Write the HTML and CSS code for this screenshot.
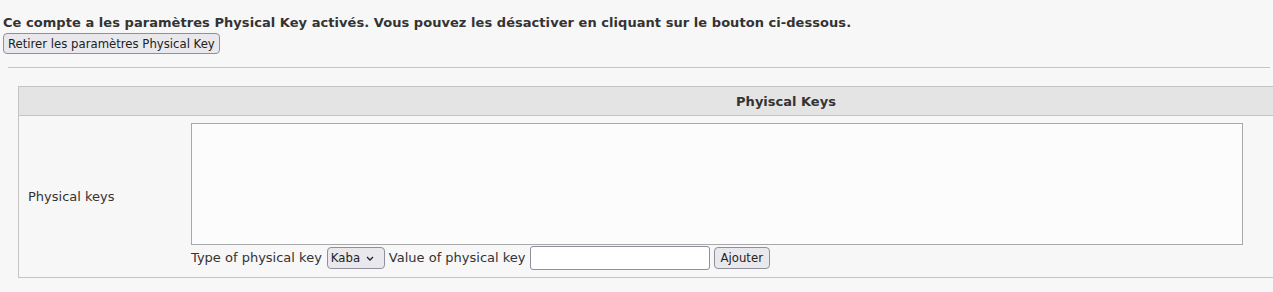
FILE: index.html
```html
<!DOCTYPE html>
<html lang="fr">
<head>
    <meta charset="UTF-8">
    <meta name="viewport" content="width=device-width, initial-scale=1.0">
    <title>Physical Key</title>
    <link rel="stylesheet" href="styles.css">
</head>
<body>
    <div class="page">
        <p class="notice">Ce compte a les paramètres Physical Key activés. Vous pouvez les désactiver en cliquant sur le bouton ci-dessous.</p>
        <button class="btn">Retirer les paramètres Physical Key</button>
        <hr class="sep">
        <table class="keys-table">
            <tr>
                <th colspan="2">Phyiscal Keys</th>
            </tr>
            <tr>
                <td class="label-cell">Physical keys</td>
                <td class="field-cell">
                    <textarea class="keys-list"></textarea>
                    <div class="add-row">
                        <span>Type of physical key</span>
                        <span class="select-wrap">
                            <select class="key-type">
                                <option>Kaba</option>
                            </select>
                            <svg class="chevron" width="8" height="5" viewBox="0 0 8 5">
                                <path d="M1 1 L4 4 L7 1" fill="none" stroke="#222" stroke-width="1.3"/>
                            </svg>
                        </span>
                        <span>Value of physical key</span>
                        <input type="text" class="key-value">
                        <button class="btn btn-add">Ajouter</button>
                    </div>
                </td>
            </tr>
        </table>
    </div>
</body>
</html>
```

FILE: styles.css
```css
html {
    overflow: hidden;
}

body {
    margin: 0;
    background-color: #f7f7f7;
    color: #333;
    font-family: "DejaVu Sans", sans-serif;
    font-size: 13px;
}

.page {
    padding: 0 3px;
}

.notice {
    margin: 15px 0 2px;
    font-weight: bold;
    line-height: 16px;
    letter-spacing: 0.05px;
}

.btn {
    font-family: "DejaVu Sans Condensed", "DejaVu Sans", sans-serif;
    font-stretch: condensed;
    font-size: 13px;
    color: #222;
    background-color: #e9e9ed;
    border: 1px solid #8f8f9d;
    border-radius: 4px;
    padding: 0 4px;
    height: 21px;
    line-height: 18px;
}

.btn-add {
    height: 22px;
    padding: 0 6px;
}

.sep {
    margin: 13px 0 18px 5px;
    border: 0;
    border-top: 1px solid #c4c4c4;
    height: 0;
}

.keys-table {
    margin-left: 15px;
    width: 1536px;
    border-collapse: collapse;
    border: 1px solid #c4c4c4;
}

.keys-table th {
    background-color: #e4e4e4;
    border-bottom: 1px solid #c4c4c4;
    height: 28px;
    padding: 0;
    font-weight: bold;
    text-align: center;
}

.label-cell {
    width: 154px;
    padding: 0 9px;
    vertical-align: middle;
}

.field-cell {
    padding: 7px 0 7px;
}

.keys-list {
    display: block;
    box-sizing: border-box;
    width: 1052px;
    height: 122px;
    margin: 0;
    background-color: #fcfcfc;
    border: 1px solid #a9a9a9;
    resize: none;
}

.add-row {
    display: flex;
    align-items: center;
    gap: 4px;
    height: 25px;
}

.select-wrap {
    position: relative;
    display: flex;
    margin-left: 1px;
}

.key-type {
    appearance: none;
    -webkit-appearance: none;
    font-family: "DejaVu Sans Condensed", "DejaVu Sans", sans-serif;
    font-stretch: condensed;
    font-size: 13px;
    color: #222;
    width: 58px;
    height: 22px;
    padding: 0 0 0 3px;
    background-color: #e9e9ed;
    border: 1px solid #8f8f9d;
    border-radius: 4px;
}

.chevron {
    position: absolute;
    right: 11px;
    top: 9px;
    pointer-events: none;
}

.key-value {
    box-sizing: border-box;
    width: 180px;
    height: 24px;
    margin: 0;
    background-color: #fff;
    border: 1px solid #8f8f9d;
    border-radius: 3px;
}
```
